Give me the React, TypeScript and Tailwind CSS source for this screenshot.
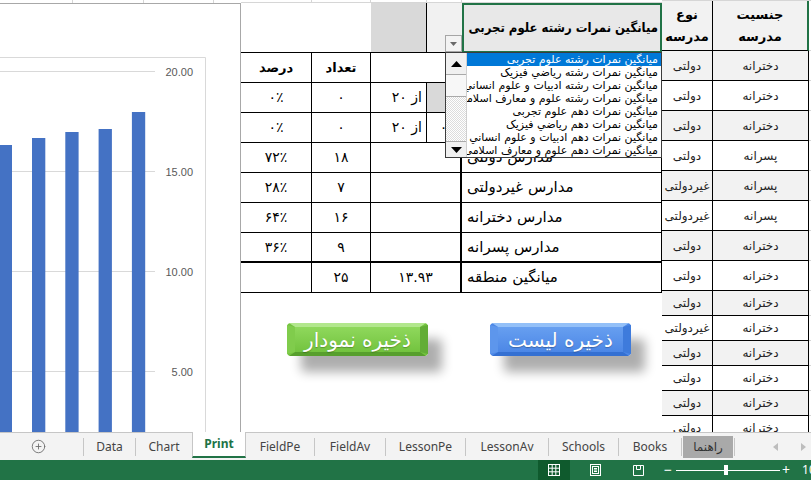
import React from "react";
import { CirclePlus } from "lucide-react";

const FA = "font-['DejaVu_Sans',sans-serif]";
const FA_NARROW = "font-['DejaVu_Sans_Condensed','DejaVu_Sans',sans-serif]";
const UI = "font-['Noto_Sans',sans-serif]";

const barValues = [16.3, 16.65, 16.95, 17.1, 17.95];
const ticks = [20, 15, 10, 5];

function ValueChart() {
  const y = (v: number) => 467 - 20 * v;
  return (
    <div className="flex h-full w-[241px] shrink-0 flex-col">
      <div className="flex h-[3px]">
        <div className="w-[73px] border-r border-[#d6d6d6]" />
        <div className="w-[71px] border-r border-[#d6d6d6]" />
        <div className="w-[70px] border-r border-[#d6d6d6]" />
      </div>
      <div className="flex-1 overflow-hidden border-t border-r border-[#a8a8a8] bg-white">
        <svg width="240" height="428" viewBox="0 0 240 428">
          <path d="M0 53.5H205.5V428" fill="none" stroke="#d9d9d9" />
          {ticks.map((t) => (
            <line key={t} x1="0" x2="155" y1={y(t) + 0.5} y2={y(t) + 0.5} stroke="#d9d9d9" />
          ))}
          {barValues.map((v, i) => (
            <rect key={i} x={-1.3 + 33.3 * i} y={y(v)} width="13.3" height={428 - y(v)} fill="#4472c4" />
          ))}
          {ticks.map((t) => (
            <text
              key={t}
              x="193"
              y={y(t) + 4.5}
              textAnchor="end"
              fontSize="11"
              fill="#595959"
              fontFamily="Liberation Sans, sans-serif"
            >
              {t.toFixed(2)}
            </text>
          ))}
        </svg>
      </div>
    </div>
  );
}

const listItems = [
  "میانگین نمرات رشته علوم تجربی",
  "میانگین نمرات رشته رياضي فيزيک",
  "میانگین نمرات رشته ادبیات و علوم انساني",
  "میانگین نمرات رشته علوم و معارف اسلامی",
  "میانگین نمرات دهم علوم تجربی",
  "میانگین نمرات دهم رياضي فيزيک",
  "میانگین نمرات دهم ادبیات و علوم انساني",
  "میانگین نمرات دهم علوم و معارف اسلامی",
];

function FieldList() {
  return (
    <div className="absolute left-[204px] top-[52px] flex h-[106px] w-[217px] border border-[#3c3c3c] bg-white">
      <div className="flex w-[21px] shrink-0 flex-col border-r border-[#cfcfcf]">
        <div className="flex h-[22px] items-center justify-center border-b border-[#a9a9a9] bg-[#f0f0f0]">
          <svg width="11" height="6" viewBox="0 0 11 6">
            <path d="M0 6L5.5 0L11 6Z" fill="#000" />
          </svg>
        </div>
        <div className="h-[22px] border-b border-[#a9a9a9] bg-[#f7f7f7]" />
        <div className="flex-1 bg-[repeating-conic-gradient(#dcdcdc_0_25%,#ffffff_0_50%)] bg-[length:2px_2px]" />
        <div className="flex h-[16px] items-center justify-center border-t border-[#a9a9a9] bg-[#f0f0f0]">
          <svg width="11" height="6" viewBox="0 0 11 6">
            <path d="M0 0L5.5 6L11 0Z" fill="#000" />
          </svg>
        </div>
      </div>
      <div dir="rtl" className={`flex min-w-0 flex-1 flex-col overflow-hidden ${FA} text-[11px]`}>
        {listItems.map((t, i) => (
          <div
            key={t}
            className={`h-[13px] shrink-0 overflow-hidden whitespace-nowrap pr-[3px] text-right leading-[13px] ${
              i === 0 ? "bg-[#0078d7] text-white" : "text-black"
            }`}
          >
            {t}
          </div>
        ))}
      </div>
    </div>
  );
}

function BevelButton({ label, tone }: { label: string; tone: "green" | "blue" }) {
  const c =
    tone === "green"
      ? { top: "#b2e78d", a: "#8fd85c", b: "#73c33f", bottom: "#579f2d", left: "#80cc4c", right: "#62ad36" }
      : { top: "#93c0f8", a: "#679ff0", b: "#4c87e6", bottom: "#3470d2", left: "#5d96ec", right: "#3e7bdc" };
  const gid = `g-${tone}`;
  return (
    <div className="relative flex h-[33px] w-[141px] items-center justify-center rounded-[4px] shadow-[14px_16px_11px_rgba(0,0,0,0.32)]">
      <svg className="absolute inset-0" width="141" height="33" viewBox="0 0 141 33">
        <defs>
          <linearGradient id={gid} x1="0" y1="0" x2="0" y2="1">
            <stop offset="0" stopColor={c.a} />
            <stop offset="1" stopColor={c.b} />
          </linearGradient>
        </defs>
        <rect x="0" y="0" width="141" height="33" rx="4" fill={c.b} />
        <path d="M2 0H139L133 4H8Z" fill={c.top} />
        <path d="M2 33H139L133 29H8Z" fill={c.bottom} />
        <path d="M0 2L8 4V29L0 31Z" fill={c.left} />
        <path d="M141 2L133 4V29L141 31Z" fill={c.right} />
        <rect x="8" y="4" width="125" height="25" fill={`url(#${gid})`} />
      </svg>
      <span
        dir="rtl"
        className={`relative ${FA} text-[20px] leading-none text-white [text-shadow:0_1px_1px_rgba(0,0,0,0.25)]`}
      >
        {label}
      </span>
    </div>
  );
}

const summaryRows = [
  ["۷۲٪", "۱۸", "مدارس دولتی"],
  ["۲۸٪", "۷", "مدارس غیردولتی"],
  ["۶۴٪", "۱۶", "مدارس دخترانه"],
  ["۳۶٪", "۹", "مدارس پسرانه"],
];

function SummaryTable() {
  const cell = "flex items-center justify-center border-r border-b border-black";
  return (
    <div className="relative flex w-[421px] shrink-0 flex-col">
      <div className="flex h-[3px] border-b border-[#d6d6d6]">
        <div className="w-[71px] border-r border-[#d6d6d6]" />
        <div className="w-[59px] border-r border-[#d6d6d6]" />
        <div className="w-[56px] border-r border-[#d6d6d6]" />
        <div className="w-[35px] border-r border-[#d6d6d6]" />
      </div>
      <div
        className={`grid grid-cols-[71px_59px_56px_35px_200px] grid-rows-[50px_repeat(8,30px)] ${FA} text-[14px] text-black`}
      >
        {/* heading row */}
        <div className="col-span-2 border-b border-black bg-white" />
        <div className="border-r border-b border-black bg-[#d9d9d9]" />
        <div className="flex items-end justify-end border-b border-black bg-[#f1f1f1]">
          <div className="flex h-[17px] w-[17px] items-center justify-center border border-[#a6a6a6] bg-[#f3f3f3]">
            <svg width="7" height="4" viewBox="0 0 7 4">
              <path d="M0 0H7L3.5 4Z" fill="#6a6a6a" />
            </svg>
          </div>
        </div>
        <div
          dir="rtl"
          className={`flex items-center overflow-hidden whitespace-nowrap border-2 border-[#217346] bg-[#e8e8e8] pr-[2px] ${FA_NARROW} text-[13px] font-bold`}
        >
          میانگین نمرات رشته علوم تجربی
        </div>

        {/* column titles */}
        <div dir="rtl" className={`${cell} text-[13px] font-bold`}>درصد</div>
        <div dir="rtl" className={`${cell} text-[13px] font-bold`}>تعداد</div>
        <div className="col-span-2 border-b border-r-2 border-black" />
        <div className={cell} />

        {/* score bounds */}
        {[0, 1].map((r) => (
          <React.Fragment key={r}>
            <div dir="ltr" className={cell}>۰٪</div>
            <div className={cell}>۰</div>
            <div dir="rtl" className={`${cell} !justify-start pr-[4px]`}>از ۲۰</div>
            <div className={`${cell} border-r-2 ${r === 0 ? "bg-[#d9d9d9]" : "bg-white"}`}>{r === 1 ? "۰" : ""}</div>
            <div className={cell} />
          </React.Fragment>
        ))}

        {summaryRows.map(([p, n, label], i) => {
          const last = i === summaryRows.length - 1 ? "border-b-2" : "";
          return (
            <React.Fragment key={label}>
              <div dir="ltr" className={`${cell} ${last}`}>{p}</div>
              <div className={`${cell} ${last}`}>{n}</div>
              <div className={`${cell} col-span-2 border-r-2 ${last}`} />
              <div dir="rtl" className={`${cell} ${last} !justify-end pl-[5px] text-[15px]`}>{label}</div>
            </React.Fragment>
          );
        })}

        <div className={cell} />
        <div className={cell}>۲۵</div>
        <div dir="ltr" className={`${cell} col-span-2 border-r-2`}>۱۳.۹۳</div>
        <div dir="rtl" className={`${cell} !justify-end pl-[5px] text-[15px]`}>میانگین منطقه</div>
      </div>

      <div className="flex flex-1 items-start gap-[62px] pl-[46px] pt-[30px]">
        <BevelButton label="ذخیره نمودار" tone="green" />
        <BevelButton label="ذخیره لیست" tone="blue" />
      </div>

      <FieldList />
    </div>
  );
}

const schoolRows: [string, string][] = [
  ["دولتی", "دخترانه"],
  ["دولتی", "دخترانه"],
  ["دولتی", "دخترانه"],
  ["دولتی", "پسرانه"],
  ["غیردولتی", "پسرانه"],
  ["غیردولتی", "پسرانه"],
  ["دولتی", "دخترانه"],
  ["دولتی", "دخترانه"],
  ["دولتی", "دخترانه"],
  ["غیردولتی", "دخترانه"],
  ["دولتی", "دخترانه"],
  ["دولتی", "دخترانه"],
  ["دولتی", "دخترانه"],
  ["دولتی", "دخترانه"],
];

function SchoolColumns() {
  return (
    <div className={`flex w-[149px] shrink-0 flex-col ${FA}`}>
      <div className="flex h-[3px] border-b border-[#d6d6d6]">
        <div className="w-[51px] border-r border-[#d6d6d6]" />
        <div className="w-[96px] border-r border-[#d6d6d6]" />
      </div>
      <div className="flex h-[50px] shrink-0">
        <div className="flex w-[51px] flex-col items-center justify-around border-r border-b border-black bg-[#f2f2f2] py-[3px] text-[13px] font-bold leading-none">
          <span>نوع</span>
          <span>مدرسه</span>
        </div>
        <div className="flex w-[96px] flex-col items-center justify-around border-r-2 border-b border-r-[#217346] border-b-black bg-[#f2f2f2] py-[3px] text-[13px] font-bold leading-none">
          <span>جنسیت</span>
          <span>مدرسه</span>
        </div>
        <div className="w-[2px] border-b border-[#d6d6d6]" />
      </div>
      {schoolRows.map(([kind, gender], i) => {
        const h = i < 8 ? "h-[30px]" : "h-[25px]";
        const bg = i % 2 === 0 ? "bg-[#f2f2f2]" : "bg-white";
        return (
          <div key={i} className={`flex ${h} shrink-0 text-[12px] text-[#222]`}>
            <div dir="rtl" className={`flex w-[51px] items-center justify-center border-r border-b border-black ${bg}`}>
              {kind}
            </div>
            <div dir="rtl" className={`flex w-[96px] items-center justify-center border-r border-b border-black ${bg}`}>
              {gender}
            </div>
            <div className="w-[2px] border-b border-[#d6d6d6]" />
          </div>
        );
      })}
    </div>
  );
}

function Sep() {
  return <div className="h-[18px] w-px shrink-0 bg-[#c6c6c6]" />;
}

function Tab({ label, w }: { label: string; w: string }) {
  return <div className={`flex h-full shrink-0 items-center justify-center ${w} text-[12px] text-[#444]`}>{label}</div>;
}

function SheetTabs() {
  return (
    <div className={`flex h-[28px] shrink-0 items-center border-t border-[#c6c6c6] bg-[#f3f3f3] ${UI}`}>
      <div className="flex h-full w-[83px] shrink-0 items-center pl-[31px]">
        <CirclePlus size={15} strokeWidth={1.4} color="#6b6b6b" />
      </div>
      <Sep />
      <Tab label="Data" w="w-[51px]" />
      <Sep />
      <div className="flex h-full w-[56px] shrink-0 items-center justify-center text-[12px] text-[#444]">Chart</div>
      <div className="-mt-px flex h-[26px] w-[54px] shrink-0 items-center justify-center self-start border-x border-b-2 border-x-[#c6c6c6] border-b-[#217346] bg-white text-[12px] font-bold text-[#217346]">
        Print
      </div>
      <Tab label="FieldPe" w="w-[68px]" />
      <Sep />
      <Tab label="FieldAv" w="w-[70px]" />
      <Sep />
      <Tab label="LessonPe" w="w-[79px]" />
      <Sep />
      <Tab label="LessonAv" w="w-[82px]" />
      <Sep />
      <Tab label="Schools" w="w-[69px]" />
      <Sep />
      <Tab label="Books" w="w-[62px]" />
      <Sep />
      <div className="flex h-full w-[52px] shrink-0 items-center px-px">
        <div dir="rtl" className={`flex h-[22px] w-full items-center justify-center bg-[#a9a9a9] text-[12px] text-[#333] ${FA}`}>
          راهنما
        </div>
      </div>
      <Sep />
      <div className="flex h-full flex-1 items-center pl-[38px]">
        <svg width="5" height="8" viewBox="0 0 5 8">
          <path d="M5 0L0 4L5 8Z" fill="#bdbdbd" />
        </svg>
        <svg className="ml-[23px]" width="5" height="8" viewBox="0 0 5 8">
          <path d="M0 0L5 4L0 8Z" fill="#bdbdbd" />
        </svg>
      </div>
    </div>
  );
}

function StatusBar() {
  return (
    <div className={`flex h-[20px] shrink-0 items-center bg-[#217346] text-white ${UI}`}>
      <div className="w-[538px] shrink-0" />
      <div className="flex h-full w-[32px] shrink-0 items-center justify-center bg-[#0f5a2d]">
        <svg width="12" height="12" viewBox="0 0 12 12" fill="none" stroke="#fff" strokeWidth="1">
          <rect x="0.5" y="0.5" width="11" height="11" />
          <path d="M4.2 0.5V11.5M7.8 0.5V11.5M0.5 4.2H11.5M0.5 7.8H11.5" />
        </svg>
      </div>
      <div className="flex w-[50px] shrink-0 justify-center">
        <svg width="11" height="12" viewBox="0 0 11 12" fill="none" stroke="#fff" strokeWidth="1">
          <rect x="0.5" y="0.5" width="10" height="11" />
          <rect x="2.5" y="2.5" width="6" height="7" />
          <path d="M4 4.5H7M4 6H7M4 7.5H7" />
        </svg>
      </div>
      <div className="flex w-[36px] shrink-0 justify-center">
        <svg width="11" height="11" viewBox="0 0 11 11" fill="none" stroke="#fff" strokeWidth="1">
          <path d="M0.5 0.5H10.5V10.5H0.5Z M3.5 0.5V4.5H7.5V0.5" />
        </svg>
      </div>
      <div className="flex h-full flex-1 items-center pl-[8px]">
        <span className="text-[14px] leading-none">−</span>
        <div className="relative ml-[4px] flex h-[10px] w-[104px] items-center">
          <div className="h-px w-full bg-white" />
          <div className="absolute left-[48px] top-0 h-[10px] w-[4px] bg-white" />
        </div>
        <span className="ml-[2px] text-[14px] leading-none">+</span>
        <span className="ml-[12px] text-[12px] leading-none">100%</span>
      </div>
    </div>
  );
}

export default function App() {
  return (
    <div className="flex h-[480px] w-[811px] flex-col overflow-hidden bg-white">
      <div className="flex h-[432px] shrink-0 overflow-hidden">
        <ValueChart />
        <SummaryTable />
        <SchoolColumns />
      </div>
      <SheetTabs />
      <StatusBar />
    </div>
  );
}
